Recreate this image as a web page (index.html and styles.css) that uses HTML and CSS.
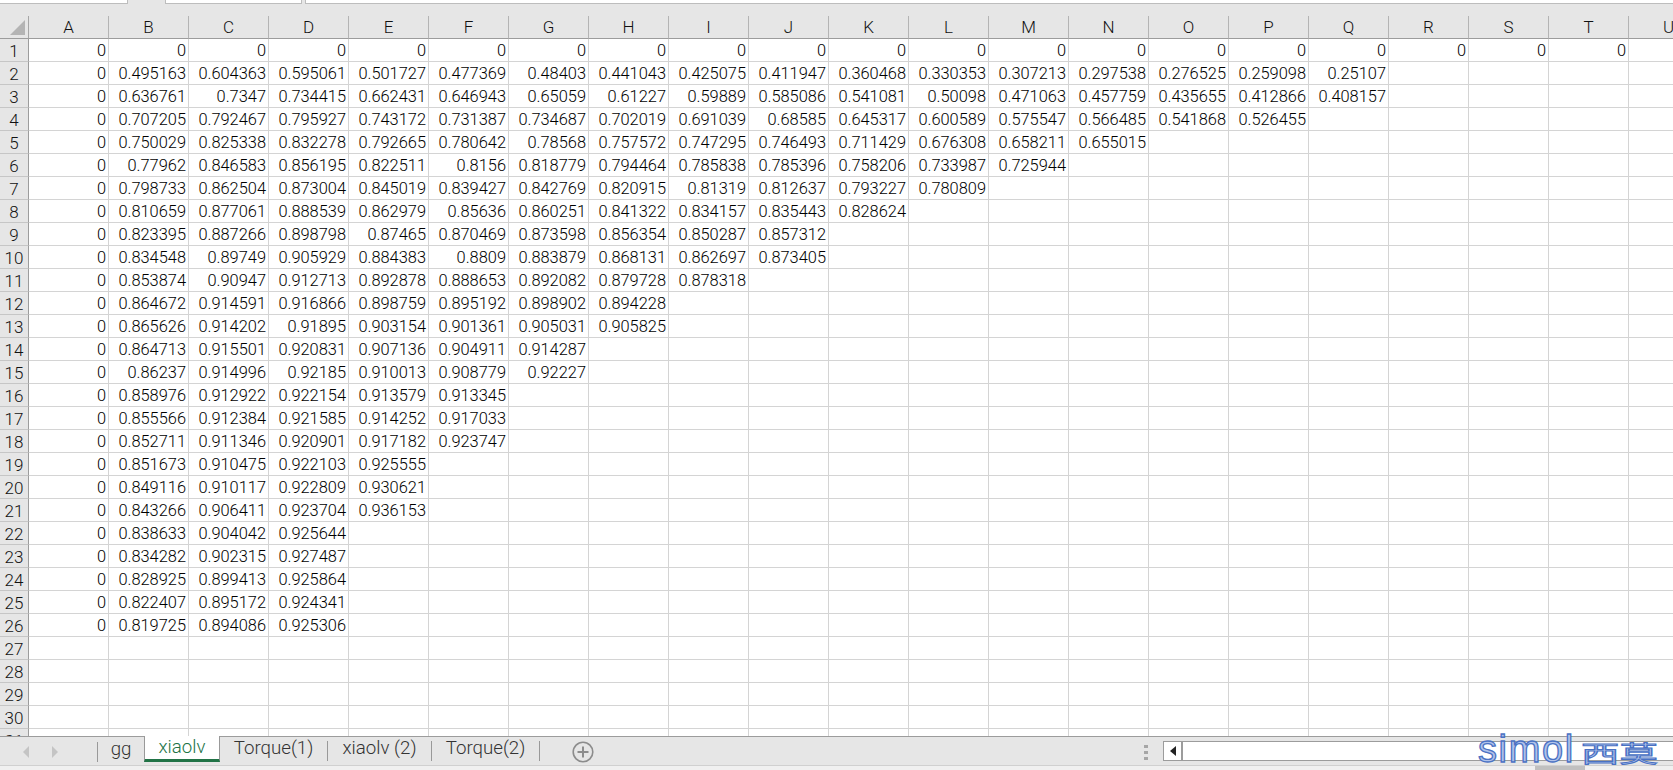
FILE: index.html
```html
<!DOCTYPE html>
<html lang="en">
<head>
<meta charset="utf-8">
<title>xiaolv</title>
<link rel="stylesheet" href="styles.css">
</head>
<body>
<div class="app">
  <div class="topstrip"><div class="box b1"></div><div class="box b2"></div><div class="box b3"></div></div>
  <div class="sheet">
    <table>
      <thead><tr><th class="corner"><svg width="15" height="15" viewBox="0 0 15 15"><polygon points="15,0 15,15 0,15" fill="#b4b4b4"/></svg></th><th>A</th><th>B</th><th>C</th><th>D</th><th>E</th><th>F</th><th>G</th><th>H</th><th>I</th><th>J</th><th>K</th><th>L</th><th>M</th><th>N</th><th>O</th><th>P</th><th>Q</th><th>R</th><th>S</th><th>T</th><th>U</th></tr></thead>
      <tbody>
<tr><th>1</th><td>0</td><td>0</td><td>0</td><td>0</td><td>0</td><td>0</td><td>0</td><td>0</td><td>0</td><td>0</td><td>0</td><td>0</td><td>0</td><td>0</td><td>0</td><td>0</td><td>0</td><td>0</td><td>0</td><td>0</td></tr>
<tr><th>2</th><td>0</td><td>0.495163</td><td>0.604363</td><td>0.595061</td><td>0.501727</td><td>0.477369</td><td>0.48403</td><td>0.441043</td><td>0.425075</td><td>0.411947</td><td>0.360468</td><td>0.330353</td><td>0.307213</td><td>0.297538</td><td>0.276525</td><td>0.259098</td><td>0.25107</td></tr>
<tr><th>3</th><td>0</td><td>0.636761</td><td>0.7347</td><td>0.734415</td><td>0.662431</td><td>0.646943</td><td>0.65059</td><td>0.61227</td><td>0.59889</td><td>0.585086</td><td>0.541081</td><td>0.50098</td><td>0.471063</td><td>0.457759</td><td>0.435655</td><td>0.412866</td><td>0.408157</td></tr>
<tr><th>4</th><td>0</td><td>0.707205</td><td>0.792467</td><td>0.795927</td><td>0.743172</td><td>0.731387</td><td>0.734687</td><td>0.702019</td><td>0.691039</td><td>0.68585</td><td>0.645317</td><td>0.600589</td><td>0.575547</td><td>0.566485</td><td>0.541868</td><td>0.526455</td></tr>
<tr><th>5</th><td>0</td><td>0.750029</td><td>0.825338</td><td>0.832278</td><td>0.792665</td><td>0.780642</td><td>0.78568</td><td>0.757572</td><td>0.747295</td><td>0.746493</td><td>0.711429</td><td>0.676308</td><td>0.658211</td><td>0.655015</td></tr>
<tr><th>6</th><td>0</td><td>0.77962</td><td>0.846583</td><td>0.856195</td><td>0.822511</td><td>0.8156</td><td>0.818779</td><td>0.794464</td><td>0.785838</td><td>0.785396</td><td>0.758206</td><td>0.733987</td><td>0.725944</td></tr>
<tr><th>7</th><td>0</td><td>0.798733</td><td>0.862504</td><td>0.873004</td><td>0.845019</td><td>0.839427</td><td>0.842769</td><td>0.820915</td><td>0.81319</td><td>0.812637</td><td>0.793227</td><td>0.780809</td></tr>
<tr><th>8</th><td>0</td><td>0.810659</td><td>0.877061</td><td>0.888539</td><td>0.862979</td><td>0.85636</td><td>0.860251</td><td>0.841322</td><td>0.834157</td><td>0.835443</td><td>0.828624</td></tr>
<tr><th>9</th><td>0</td><td>0.823395</td><td>0.887266</td><td>0.898798</td><td>0.87465</td><td>0.870469</td><td>0.873598</td><td>0.856354</td><td>0.850287</td><td>0.857312</td></tr>
<tr><th>10</th><td>0</td><td>0.834548</td><td>0.89749</td><td>0.905929</td><td>0.884383</td><td>0.8809</td><td>0.883879</td><td>0.868131</td><td>0.862697</td><td>0.873405</td></tr>
<tr><th>11</th><td>0</td><td>0.853874</td><td>0.90947</td><td>0.912713</td><td>0.892878</td><td>0.888653</td><td>0.892082</td><td>0.879728</td><td>0.878318</td></tr>
<tr><th>12</th><td>0</td><td>0.864672</td><td>0.914591</td><td>0.916866</td><td>0.898759</td><td>0.895192</td><td>0.898902</td><td>0.894228</td></tr>
<tr><th>13</th><td>0</td><td>0.865626</td><td>0.914202</td><td>0.91895</td><td>0.903154</td><td>0.901361</td><td>0.905031</td><td>0.905825</td></tr>
<tr><th>14</th><td>0</td><td>0.864713</td><td>0.915501</td><td>0.920831</td><td>0.907136</td><td>0.904911</td><td>0.914287</td></tr>
<tr><th>15</th><td>0</td><td>0.86237</td><td>0.914996</td><td>0.92185</td><td>0.910013</td><td>0.908779</td><td>0.92227</td></tr>
<tr><th>16</th><td>0</td><td>0.858976</td><td>0.912922</td><td>0.922154</td><td>0.913579</td><td>0.913345</td></tr>
<tr><th>17</th><td>0</td><td>0.855566</td><td>0.912384</td><td>0.921585</td><td>0.914252</td><td>0.917033</td></tr>
<tr><th>18</th><td>0</td><td>0.852711</td><td>0.911346</td><td>0.920901</td><td>0.917182</td><td>0.923747</td></tr>
<tr><th>19</th><td>0</td><td>0.851673</td><td>0.910475</td><td>0.922103</td><td>0.925555</td></tr>
<tr><th>20</th><td>0</td><td>0.849116</td><td>0.910117</td><td>0.922809</td><td>0.930621</td></tr>
<tr><th>21</th><td>0</td><td>0.843266</td><td>0.906411</td><td>0.923704</td><td>0.936153</td></tr>
<tr><th>22</th><td>0</td><td>0.838633</td><td>0.904042</td><td>0.925644</td></tr>
<tr><th>23</th><td>0</td><td>0.834282</td><td>0.902315</td><td>0.927487</td></tr>
<tr><th>24</th><td>0</td><td>0.828925</td><td>0.899413</td><td>0.925864</td></tr>
<tr><th>25</th><td>0</td><td>0.822407</td><td>0.895172</td><td>0.924341</td></tr>
<tr><th>26</th><td>0</td><td>0.819725</td><td>0.894086</td><td>0.925306</td></tr>
<tr><th>27</th></tr>
<tr><th>28</th></tr>
<tr><th>29</th></tr>
<tr><th>30</th></tr>
<tr><th>31</th></tr>
      </tbody>
    </table>
  </div>
  <div class="tabbar">
    <div class="nav">
      <svg width="7" height="12" viewBox="0 0 7 12"><polygon points="6,0 6,12 0,6" fill="#c4c4c4"/></svg>
      <svg width="7" height="12" viewBox="0 0 7 12"><polygon points="1,0 1,12 7,6" fill="#c4c4c4"/></svg>
    </div>
    <div class="tabs">
      <div class="tab t1">gg</div>
      <div class="tab active">xiaolv</div>
      <div class="tab t3">Torque(1)</div>
      <div class="tab t4">xiaolv (2)</div>
      <div class="tab t5">Torque(2)</div>
    </div>
    <svg class="add" width="24" height="24" viewBox="0 0 24 24"><circle cx="12" cy="12" r="9.8" fill="none" stroke="#8c8c8c" stroke-width="1.6"/><path d="M12 6.5v11M6.5 12h11" stroke="#8c8c8c" stroke-width="2" fill="none"/></svg>
    <div class="grip"><i></i><i></i><i></i></div>
    <div class="hscroll">
      <div class="hbtn"><svg width="6" height="10" viewBox="0 0 6 10"><polygon points="6,0 6,10 0,5" fill="#222"/></svg></div>
    </div>
  </div>
  <div class="statusstrip"><div class="thumb"></div></div>
  <div class="mark"><span class="mark-en">simol</span><span class="mark-cn">西莫</span></div>
</div>
</body>
</html>
```
FILE: styles.css
```css
* { box-sizing: border-box; }
html, body { margin: 0; height: 100%; overflow: hidden; }
body { font-family: Roboto, "Noto Sans", sans-serif; font-size: 16.4px; font-weight: 300; color: #000; background: #e6e6e6; }
.app { position: relative; width: 1673px; height: 770px; display: flex; flex-direction: column; overflow: hidden; }

.topstrip { height: 16px; flex: none; display: flex; background: #e6e6e6; }
.box { height: 4px; background: #fff; border: 1px solid #bdbdbd; border-top: 0; }
.b1 { width: 128px; border-left: 0; }
.b2 { width: 137px; margin-left: 37px; }
.b3 { flex: 1; margin-left: 3px; border-right: 0; }

.sheet {
  height: 720px; flex: none; overflow: hidden; background-color: #fff;
  background-image:
    linear-gradient(to left, #d4d4d4 1px, transparent 1px),
    linear-gradient(to top, #d4d4d4 1px, transparent 1px);
  background-size: 80px 100%, 100% 23px;
  background-position: 29px 0, 0 23px;
}
table { border-collapse: separate; border-spacing: 0; table-layout: fixed; width: 1709px; }
th, td { height: 23px; padding: 0; font-weight: 300; white-space: nowrap; overflow: hidden; line-height: 22px; }
td { width: 80px; text-align: right; vertical-align: top; padding: 1px 3px 0 0; }
thead th {
  width: 80px; background: #e6e6e6; color: #111; font-size: 17px; text-align: center;
  border-right: 1px solid #b4b4b4; border-bottom: 1px solid #9c9c9c;
}
thead .corner { width: 29px; text-align: left; vertical-align: top; padding: 4px 0 0 10px; border-right-color: #a6a6a6; }
.corner svg { display: block; }
tbody th { width: 29px; background: #e6e6e6; color: #111; font-size: 17px; line-height: 20px; vertical-align: top; padding-top: 2px; text-align: center; border-right: 1px solid #9c9c9c; border-bottom: 1px solid #c6c6c6; }

.tabbar { height: 29px; flex: none; display: flex; align-items: flex-start; background: #e6e6e6; border-top: 1px solid #9c9c9c; }
.nav { width: 98px; height: 20px; margin-top: 5px; display: flex; align-items: center; gap: 21px; padding-left: 23px; border-right: 1px solid #999; }
.tabs { display: flex; height: 26px; }
.tab { height: 20px; margin-top: 4px; line-height: 15px; color: #333; text-align: center; border-right: 1px solid #999; font-size: 18.7px; }
.t1 { width: 46px; border-right: 0; line-height: 17px; }
.active { width: 76px; height: 26px; margin-top: -1px; padding-top: 3px; line-height: 17px; color: #217346; background: #fff; border: 1px solid #999; border-top: 0; border-bottom: 3px solid #217346; }
.t3 { width: 108px; }
.t4 { width: 104px; }
.t5 { width: 108px; }
.add { margin: 3px 0 0 31px; }
.grip { width: 4px; margin: 8px 0 0 549px; display: flex; flex-direction: column; gap: 3px; }
.grip i { display: block; width: 4px; height: 3px; background: #a6a6a6; }
.hscroll { flex: 1; height: 20px; margin: 4px 0 0 15px; background: #fff; border: 1px solid #9c9c9c; border-right: 0; }
.hbtn { width: 19px; height: 18px; display: flex; align-items: center; justify-content: center; border-right: 2px solid #9c9c9c; }

.statusstrip { height: 5px; flex: none; background: #f0f0f0; border-top: 1px solid #d0d0d0; }
.thumb { width: 50px; height: 4px; margin-left: 1535px; background: #c0c0c0; }

.mark { position: absolute; left: 1478px; top: 728px; display: flex; align-items: flex-start; pointer-events: none; }
.mark-en { font-family: "Liberation Sans", sans-serif; font-size: 38px; font-weight: 400; line-height: 42px; letter-spacing: 1.6px; color: #b0c2ea; -webkit-text-stroke: 1.3px #4a72c4; }
.mark-cn { font-family: "Noto Sans CJK SC", sans-serif; font-size: 24px; font-weight: 400; line-height: 30px; margin: 9px 0 0 6px; color: #b0c2ea; -webkit-text-stroke: 1px #4a72c4; transform-origin: 0 50%; transform: scale(1.6, .95); }
```
